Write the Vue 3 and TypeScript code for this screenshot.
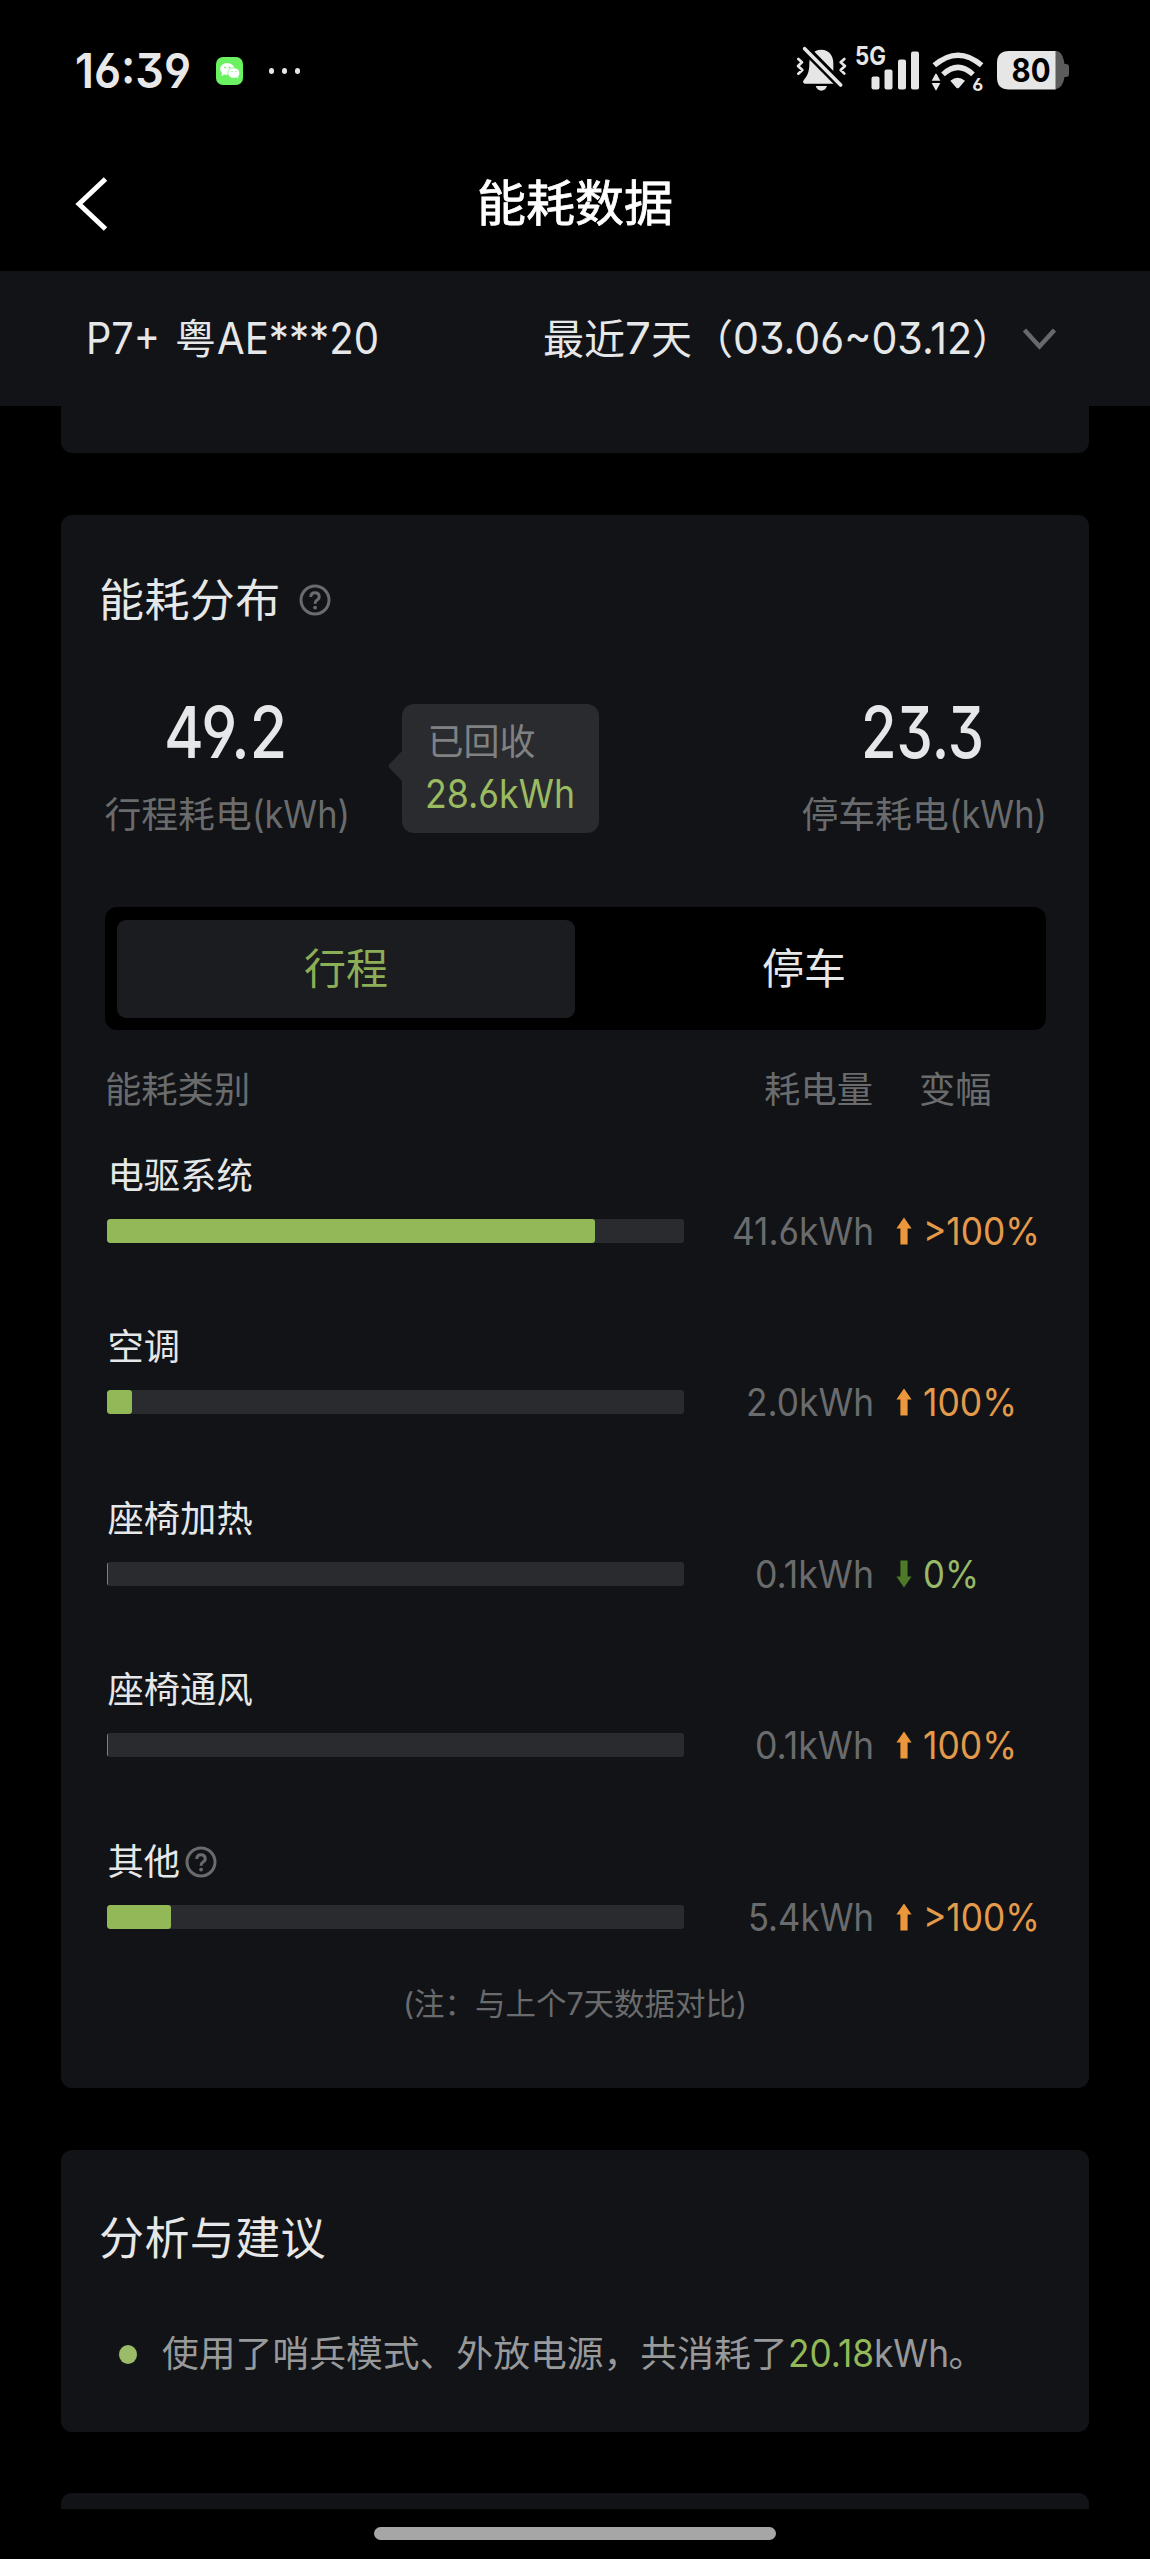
<script setup lang="ts">
import { ref, type Directive } from 'vue'

interface UsageRow {
  name: string
  percent: number
  value: string
  valueWidth: number
  trend: 'up' | 'down'
  change: string
  changeWidth: number
  help?: boolean
}

// Condenses a run of text horizontally so that it takes up the given width.
const vFit: Directive<HTMLElement, number> = {
  mounted(el, { value }) {
    const natural = el.getBoundingClientRect().width
    el.style.transform = `scaleX(${value / natural})`
    el.style.marginRight = `${value - natural}px`
  },
}

const tabs = ['行程', '停车']
const activeTab = ref(0)

const rows: UsageRow[] = [
  { name: '电驱系统', percent: 84.7, value: '41.6kWh', valueWidth: 142, trend: 'up', change: '>100%', changeWidth: 117 },
  { name: '空调', percent: 4.25, value: '2.0kWh', valueWidth: 128, trend: 'up', change: '100%', changeWidth: 94 },
  { name: '座椅加热', percent: 0.2, value: '0.1kWh', valueWidth: 119, trend: 'down', change: '0%', changeWidth: 56 },
  { name: '座椅通风', percent: 0.2, value: '0.1kWh', valueWidth: 119, trend: 'up', change: '100%', changeWidth: 94 },
  { name: '其他', percent: 11.1, value: '5.4kWh', valueWidth: 126, trend: 'up', change: '>100%', changeWidth: 117, help: true },
]
</script>

<template>
  <div class="page">
    <div class="status">
      <span class="clock-box"><span class="fit clock" v-fit="116">16:39</span></span>
      <svg class="wechat" viewBox="0 0 27 28">
        <rect width="27" height="28" rx="7" fill="#6bf263" />
        <ellipse cx="11.3" cy="12" rx="7.2" ry="6" fill="#fff" />
        <path d="M6 16l-.6 3 3.2-1.6z" fill="#fff" />
        <ellipse cx="17.8" cy="16" rx="6" ry="5.2" fill="#fff" stroke="#6bf263" stroke-width=".7" />
        <path d="M20 20l2.3 1.6-.3-2.8z" fill="#fff" />
        <circle cx="9" cy="10.4" r=".9" fill="#6bf263" />
        <circle cx="13.6" cy="10.4" r=".9" fill="#6bf263" />
        <circle cx="16" cy="14.6" r=".7" fill="#6bf263" />
        <circle cx="19.8" cy="14.6" r=".7" fill="#6bf263" />
      </svg>
      <span class="dots"><i></i><i></i><i></i></span>

      <div class="status-icons">
        <svg class="bell" width="51" height="46" viewBox="48 45 153 138">
          <path d="M124 56C149 56 160 76 160 96V122L162 158H74Q66 155 71 148C83 134 88 122 88 96C88 74 100 56 124 56Z" fill="#e6e6e6" />
          <path d="M107 165H141Q136 179 124 179T107 165Z" fill="#e6e6e6" />
          <path d="M70 48L190 169" stroke="#000" stroke-width="27" />
          <path d="M74 53L182 162" stroke="#e6e6e6" stroke-width="11" stroke-linecap="round" />
          <path d="M55 84L66 94L54 105L67 117L55 128M193 84L182 94L195 105L182 117L193 128" fill="none" stroke="#e6e6e6" stroke-width="8" stroke-linecap="round" stroke-linejoin="round" />
        </svg>
        <svg class="signal" width="66" height="46" viewBox="0 0 66 46">
          <text x="0" y="18.5" textLength="31" lengthAdjust="spacingAndGlyphs" class="net">5G</text>
          <rect x="16.5" y="30.5" width="8" height="13" rx="2" fill="#e6e6e6" />
          <rect x="29.5" y="23.5" width="8" height="20" rx="2" fill="#e6e6e6" />
          <rect x="43" y="13.5" width="8" height="30" rx="2" fill="#e6e6e6" />
          <rect x="56" y="5.5" width="8" height="38" rx="2" fill="#e6e6e6" />
        </svg>
        <svg class="wifi" width="53" height="46" viewBox="453 45 159 138">
          <g fill="none" stroke="#e6e6e6" stroke-width="16">
            <path d="M463 103Q534 42 605 103" />
            <path d="M489 130Q534 88 579 130" />
          </g>
          <path d="M511 149Q533 131 555 149L537 170Q533 174 529 170Z" fill="#e6e6e6" />
          <path d="M455 149L466 129Q468 126 470 129L481 149ZM455 156H481L470 176Q468 179 466 176Z" fill="#e6e6e6" />
          <text x="577" y="179" textLength="33" lengthAdjust="spacingAndGlyphs" class="gen">6</text>
        </svg>
        <svg class="battery" width="73" height="46" viewBox="0 0 73 46">
          <path d="M58 5H60Q65 6 67 15L67.500 18H69Q72 18 72 21V28Q72 31 69 31H67.500Q66 42 58 43.500Z" fill="#5c5c5c" />
          <path d="M12 5H58.500V43.500H12Q0 43.500 0 31.500V17Q0 5 12 5Z" fill="#e6e6e6" />
          <text x="14.500" y="35.800" textLength="39" lengthAdjust="spacingAndGlyphs" class="level">80</text>
        </svg>
      </div>
    </div>

    <header class="nav">
      <svg class="back" width="34" height="52" viewBox="0 0 34 52">
        <path d="M30.500 1L4 26L30.500 51" fill="none" stroke="#fff" stroke-width="5" />
      </svg>
      <h1>能耗数据</h1>
    </header>

    <div class="filter">
      <div class="car">
        <span class="fit" v-fit="74">P7+</span><span class="plate">粤</span><span class="fit" v-fit="162">AE***20</span>
      </div>
      <div class="range">
        最近<span class="fit" v-fit="26">7</span>天（<span class="fit" v-fit="239">03.06~03.12</span>）
      </div>
      <svg class="chevron" width="33" height="22" viewBox="0 0 33 22">
        <path d="M1.500 2L16.500 18.500L31.500 2" fill="none" stroke="#67686a" stroke-width="4.500" />
      </svg>
    </div>

    <section class="card card-prev"></section>

    <section class="card usage">
      <div class="card-title">
        <h2>能耗分布</h2>
        <svg class="help" width="32" height="32" viewBox="0 0 32 32">
          <circle cx="16" cy="16" r="14" fill="none" stroke="#6a6b6d" stroke-width="3" />
          <path d="M11.800 13Q11.800 8.800 16 8.800T20.200 12.800Q20.200 15 17.800 16.300Q16.100 17.300 16.100 19.800" fill="none" stroke="#6a6b6d" stroke-width="3" />
          <circle cx="16.100" cy="23.600" r="1.900" fill="#6a6b6d" />
        </svg>
      </div>

      <div class="stats">
        <div class="stat">
          <div class="big"><span class="fit" v-fit="123">49.2</span></div>
          <div class="sub">行程耗电<span class="fit" v-fit="98">(kWh)</span></div>
        </div>
        <div class="tip">
          <svg class="tip-arrow" width="15" height="32" viewBox="0 0 15 32">
            <path d="M15 0V32L1.500 18Q0 16 1.500 14Z" fill="#2a2b2e" />
          </svg>
          <div class="tip-label">已回收</div>
          <div class="tip-value"><span class="fit" v-fit="150">28.6kWh</span></div>
        </div>
        <div class="stat stat-right">
          <div class="big"><span class="fit" v-fit="123">23.3</span></div>
          <div class="sub">停车耗电<span class="fit" v-fit="98">(kWh)</span></div>
        </div>
      </div>

      <div class="tabs">
        <div v-for="(t, i) in tabs" :key="t" class="tab" :class="{ active: i === activeTab }" @click="activeTab = i">{{ t }}</div>
      </div>

      <div class="thead">
        <span class="c-name">能耗类别</span>
        <span class="c-value">耗电量</span>
        <span class="c-change">变幅</span>
      </div>

      <div v-for="r in rows" :key="r.name" class="row">
        <div class="row-name">
          {{ r.name }}
          <svg v-if="r.help" class="help" width="32" height="32" viewBox="0 0 32 32">
            <circle cx="16" cy="16" r="14" fill="none" stroke="#6a6b6d" stroke-width="3" />
            <path d="M11.800 13Q11.800 8.800 16 8.800T20.200 12.800Q20.200 15 17.800 16.300Q16.100 17.300 16.100 19.800" fill="none" stroke="#6a6b6d" stroke-width="3" />
            <circle cx="16.100" cy="23.600" r="1.900" fill="#6a6b6d" />
          </svg>
        </div>
        <div class="row-data">
          <div class="track"><div class="fill" :class="{ thin: r.percent < 1 }" :style="{ width: r.percent + '%' }"></div></div>
          <div class="value"><span class="fit" v-fit="r.valueWidth">{{ r.value }}</span></div>
          <svg class="arrow" :class="r.trend" width="16" height="28" viewBox="0 0 16 28">
            <path d="M8 .5L15.600 11.500H11.600V27.500H4.400V11.500H.4Z" />
          </svg>
          <div class="change" :class="r.trend"><span class="fit" v-fit="r.changeWidth">{{ r.change }}</span></div>
        </div>
      </div>

      <div class="note"><span class="fit" v-fit="344">(注：与上个7天数据对比)</span></div>
    </section>

    <section class="card advice">
      <div class="advice-title"><h2>分析与建议</h2></div>
      <div class="advice-line">
        <i class="bullet"></i>
        <p>使用了哨兵模式、外放电源，共消耗了<b class="fit" v-fit="86">20.18</b><span class="fit" v-fit="75">kWh</span>。</p>
      </div>
    </section>

    <section class="card card-next"></section>
    <div class="home"><i></i></div>
  </div>
</template>

<style>
body {
  background: #000;
}
</style>

<style scoped>
.page {
  width: 1150px;
  height: 2559px;
  overflow: hidden;
  background: #000;
  color: #e6e7e8;
  font-family: Inter, "Noto Sans CJK SC", sans-serif;
  font-feature-settings: "cv03", "cv04", "cv09";
  display: flex;
  flex-direction: column;
  white-space: nowrap;
}
h1, h2, p {
  margin: 0;
  font-weight: 400;
}
svg {
  flex: none;
  overflow: visible;
}
.fit {
  display: inline-block;
  transform-origin: 0 50%;
  font-weight: 400;
}
.status {
  box-sizing: border-box;
  height: 133px;
  padding: 8px 80px 0 75px;
  display: flex;
  align-items: center;
  flex: none;
}
.clock-box {
  width: 140.500px;
}
.clock {
  font-size: 48px;
  line-height: 60px;
  font-weight: 600;
  color: #e8e8e8;
}
.wechat {
  width: 27px;
  height: 28px;
}
.dots {
  display: flex;
  gap: 7.500px;
  margin-left: 26px;
}
.dots i {
  width: 5.500px;
  height: 6px;
  border-radius: 50%;
  background: #e6e6e6;
}
.status-icons {
  margin-left: auto;
  display: flex;
  padding-bottom: 4px;
}
.signal {
  margin-left: 8px;
}
.wifi {
  margin-left: 10px;
}
.battery {
  margin-left: 13px;
}
.net {
  font-size: 25px;
  font-weight: 700;
  fill: #e6e6e6;
}
.gen {
  font-size: 54px;
  font-weight: 700;
  fill: #e6e6e6;
}
.level {
  font-size: 32px;
  font-weight: 700;
  fill: #000;
}
.nav {
  box-sizing: border-box;
  height: 138px;
  padding-top: 3px;
  flex: none;
  display: grid;
  grid-template-columns: 76px 1fr 76px;
  align-items: center;
}
.back {
  margin-left: 75px;
}
.nav h1 {
  text-align: center;
  font-size: 49px;
  line-height: 70px;
  color: #fff;
  -webkit-text-stroke: 0.800px #fff;
}
.filter {
  height: 135px;
  flex: none;
  display: flex;
  align-items: center;
  background: #111316;
  font-size: 41px;
  line-height: 60px;
  box-sizing: border-box;
  padding: 0 94px 0 86px;
}
.filter .fit {
  font-size: 44px;
}
.plate {
  margin: 0 1px 0 15px;
}
.range {
  margin-left: auto;
}
.chevron {
  margin-left: 10px;
}
.card {
  width: 1028px;
  margin-left: 61px;
  background: #111316;
  border-radius: 11px;
  flex: none;
  box-sizing: border-box;
}
.card-prev {
  height: 47px;
  border-radius: 0 0 11px 11px;
}
.usage {
  margin-top: 62px;
  height: 1573px;
  padding: 0 43.500px;
}
.card-title {
  height: 170px;
  display: flex;
  align-items: center;
  gap: 18px;
  margin-left: -5.500px;
}
h2 {
  font-size: 45px;
  line-height: 60px;
  padding-top: 2px;
  letter-spacing: 0.400px;
}
.stats {
  height: 222px;
  display: flex;
  align-items: flex-start;
}
.stat {
  width: 244px;
  text-align: center;
}
.stat-right {
  margin-left: auto;
}
.big {
  height: 94px;
  line-height: 94px;
  font-size: 71px;
  padding-right: 2px;
}
.big .fit {
  font-weight: 450;
}
.sub {
  height: 70px;
  line-height: 70px;
  font-size: 36.800px;
  color: #6a6b6d;
}
.sub .fit {
  font-size: 38px;
}
.tip {
  position: relative;
  box-sizing: border-box;
  width: 197px;
  height: 129px;
  margin: 19px 0 0 53px;
  padding: 13px 0 0 26px;
  border-radius: 12px;
  background: #2a2b2e;
}
.tip-arrow {
  position: absolute;
  left: -14px;
  top: 46px;
}
.tip-label {
  height: 51px;
  line-height: 51px;
  font-size: 36px;
  color: #808183;
}
.tip-value {
  height: 51px;
  line-height: 51px;
  margin-left: -3px;
  font-size: 39px;
  color: #9abb61;
}
.tabs {
  height: 123px;
  box-sizing: border-box;
  padding: 12.500px;
  display: flex;
  background: #000;
  border-radius: 12px;
}
.tab {
  flex: 1;
  border-radius: 9px;
  text-align: center;
  font-size: 42px;
  line-height: 97px;
}
.tab.active {
  background: #1b1c1f;
  color: #8bae57;
}
.thead {
  height: 120px;
  line-height: 121px;
  display: flex;
  font-size: 36.300px;
  color: #6a6b6d;
}
.c-name {
  margin-left: 0.500px;
  width: 580px;
}
.c-value {
  width: 188px;
  text-align: right;
}
.c-change {
  margin-left: 46px;
}
.row {
  height: 171.400px;
}
.row:nth-last-child(2) {
  height: 109px;
}
.row-name {
  height: 53px;
  line-height: 55px;
  font-size: 36.300px;
  margin-left: 3px;
  display: flex;
  align-items: center;
  gap: 5px;
}
.row-data {
  height: 56px;
  display: flex;
  align-items: center;
}
.track {
  width: 576.500px;
  height: 24px;
  margin-left: 2.500px;
  border-radius: 3px;
  background: #2a2b2e;
  overflow: hidden;
}
.fill {
  height: 100%;
  border-radius: 3px;
  background: #93b858;
}
.fill.thin {
  border-radius: 0;
  opacity: 0.700;
}
.value {
  width: 190px;
  text-align: right;
  font-size: 38px;
  line-height: 56px;
  color: #6a6b6d;
}
.arrow {
  margin-left: 22.500px;
}
.arrow.up {
  fill: #ec973b;
}
.arrow.down {
  fill: #4d7a28;
  transform: rotate(180deg);
}
.change {
  margin-left: 10.500px;
  font-size: 38px;
  line-height: 56px;
}
.change.up {
  color: #e49a4b;
}
.change.down {
  color: #97b968;
}
.note {
  height: 119px;
  line-height: 118px;
  text-align: center;
  font-size: 30.500px;
  color: #6a6b6d;
}
.advice {
  margin-top: 62px;
  height: 282px;
  padding-left: 38px;
}
.advice-title {
  height: 176px;
  display: flex;
  align-items: center;
}
.advice-line {
  display: flex;
  align-items: center;
  height: 57px;
  font-size: 36.800px;
  line-height: 54px;
  color: #98999b;
}
.advice-line p {
  padding-bottom: 2px;
}
.advice-line .fit {
  font-size: 38px;
}
.advice-line b {
  color: #93b858;
}
.bullet {
  width: 18px;
  height: 19px;
  border-radius: 50%;
  background: #9abb68;
  margin: 0 25px 0 20px;
}
.card-next {
  margin-top: 61px;
  height: 16px;
  border-radius: 11px 11px 0 0;
}
.home {
  padding-top: 18px;
  display: flex;
  justify-content: center;
}
.home i {
  width: 402px;
  height: 13px;
  border-radius: 7px;
  background: #a6a6a6;
}
</style>
